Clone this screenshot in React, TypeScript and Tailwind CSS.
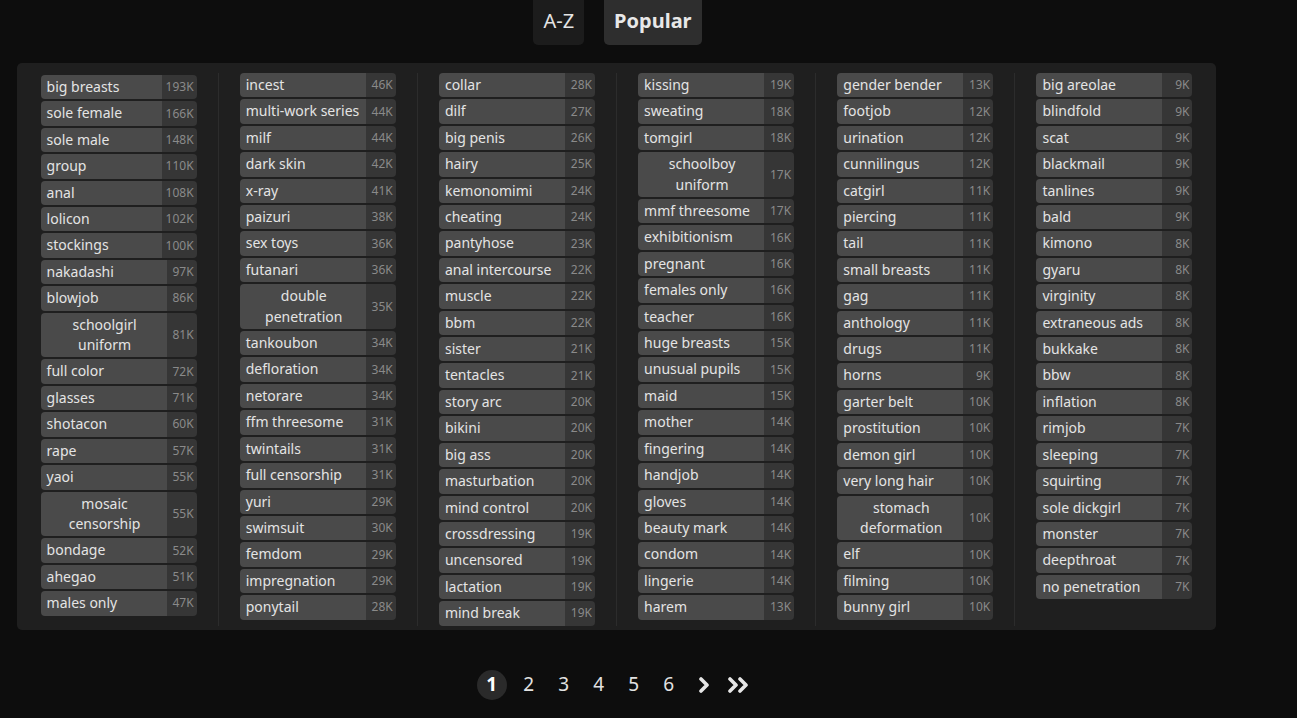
import React from 'react'

type Tag = [string, string]

const columns: Tag[][] = [
  [
    ['big breasts', '193K'], ['sole female', '166K'], ['sole male', '148K'], ['group', '110K'],
    ['anal', '108K'], ['lolicon', '102K'], ['stockings', '100K'], ['nakadashi', '97K'],
    ['blowjob', '86K'], ['schoolgirl|uniform', '81K'], ['full color', '72K'], ['glasses', '71K'],
    ['shotacon', '60K'], ['rape', '57K'], ['yaoi', '55K'], ['mosaic|censorship', '55K'],
    ['bondage', '52K'], ['ahegao', '51K'], ['males only', '47K'],
  ],
  [
    ['incest', '46K'], ['multi-work series', '44K'], ['milf', '44K'], ['dark skin', '42K'],
    ['x-ray', '41K'], ['paizuri', '38K'], ['sex toys', '36K'], ['futanari', '36K'],
    ['double|penetration', '35K'], ['tankoubon', '34K'], ['defloration', '34K'], ['netorare', '34K'],
    ['ffm threesome', '31K'], ['twintails', '31K'], ['full censorship', '31K'], ['yuri', '29K'],
    ['swimsuit', '30K'], ['femdom', '29K'], ['impregnation', '29K'], ['ponytail', '28K'],
  ],
  [
    ['collar', '28K'], ['dilf', '27K'], ['big penis', '26K'], ['hairy', '25K'],
    ['kemonomimi', '24K'], ['cheating', '24K'], ['pantyhose', '23K'], ['anal intercourse', '22K'],
    ['muscle', '22K'], ['bbm', '22K'], ['sister', '21K'], ['tentacles', '21K'],
    ['story arc', '20K'], ['bikini', '20K'], ['big ass', '20K'], ['masturbation', '20K'],
    ['mind control', '20K'], ['crossdressing', '19K'], ['uncensored', '19K'], ['lactation', '19K'],
    ['mind break', '19K'],
  ],
  [
    ['kissing', '19K'], ['sweating', '18K'], ['tomgirl', '18K'], ['schoolboy|uniform', '17K'],
    ['mmf threesome', '17K'], ['exhibitionism', '16K'], ['pregnant', '16K'], ['females only', '16K'],
    ['teacher', '16K'], ['huge breasts', '15K'], ['unusual pupils', '15K'], ['maid', '15K'],
    ['mother', '14K'], ['fingering', '14K'], ['handjob', '14K'], ['gloves', '14K'],
    ['beauty mark', '14K'], ['condom', '14K'], ['lingerie', '14K'], ['harem', '13K'],
  ],
  [
    ['gender bender', '13K'], ['footjob', '12K'], ['urination', '12K'], ['cunnilingus', '12K'],
    ['catgirl', '11K'], ['piercing', '11K'], ['tail', '11K'], ['small breasts', '11K'],
    ['gag', '11K'], ['anthology', '11K'], ['drugs', '11K'], ['horns', '9K'],
    ['garter belt', '10K'], ['prostitution', '10K'], ['demon girl', '10K'], ['very long hair', '10K'],
    ['stomach|deformation', '10K'], ['elf', '10K'], ['filming', '10K'], ['bunny girl', '10K'],
  ],
  [
    ['big areolae', '9K'], ['blindfold', '9K'], ['scat', '9K'], ['blackmail', '9K'],
    ['tanlines', '9K'], ['bald', '9K'], ['kimono', '8K'], ['gyaru', '8K'],
    ['virginity', '8K'], ['extraneous ads', '8K'], ['bukkake', '8K'], ['bbw', '8K'],
    ['inflation', '8K'], ['rimjob', '7K'], ['sleeping', '7K'], ['squirting', '7K'],
    ['sole dickgirl', '7K'], ['monster', '7K'], ['deepthroat', '7K'], ['no penetration', '7K'],
  ],
]

function TagRow({ name, count }: { name: string; count: string }) {
  const lines = name.split('|')
  return (
    <a href="#" className="flex w-[156px] rounded-[4px] overflow-hidden">
      <span className="flex-1 min-w-0 bg-[#4a4a4a] text-[#e4e4e4] text-[14px] leading-[20.4px] py-[2px] pl-[6px] pr-[4px]">
        {lines.length > 1 ? (
          <span className="block text-center">
            {lines[0]}
            <br />
            {lines[1]}
          </span>
        ) : (
          <span className="whitespace-nowrap">{name}</span>
        )}
      </span>
      <span className="flex items-center justify-end min-w-[30px] bg-[#363636] text-[#8a8a8a] text-[12px] pl-[4px] pr-[3px]">
        {count}
      </span>
    </a>
  )
}

function Chevron({ double }: { double?: boolean }) {
  return (
    <svg width={double ? 24 : 12} height="16" viewBox={double ? '0 0 24 16' : '0 0 12 16'} fill="none">
      <polyline points="3,2 9,8 3,14" stroke="#e6e6e6" strokeWidth="3.6" strokeLinecap="round" strokeLinejoin="round" />
      {double && (
        <polyline points="13,2 19,8 13,14" stroke="#e6e6e6" strokeWidth="3.6" strokeLinecap="round" strokeLinejoin="round" />
      )}
    </svg>
  )
}

export default function App() {
  return (
    <div className="min-h-screen bg-[#0d0d0d] font-['Noto_Sans',sans-serif]">
      <div className="w-[1233px]">
        {/* sort tabs */}
        <div className="flex justify-center gap-[20px] pl-[2px]">
          <a href="#" className="flex items-center h-[45px] pb-[3px] px-[10px] rounded-b-[5px] bg-[#1c1c1c] text-[#e4e4e4] text-[20px]">
            A-Z
          </a>
          <a href="#" className="flex items-center h-[45px] pb-[3px] px-[10px] rounded-b-[5px] bg-[#2e2e2e] text-[#e8e8e8] text-[20px] font-bold">
            Popular
          </a>
        </div>

        {/* tag panel */}
        <div className="mx-[17px] mt-[18px] flex rounded-[5px] bg-[#1f1f1f] px-[2.5px] pt-[10px] pb-[4px]">
          {columns.map((col, i) => (
            <div
              key={i}
              className={`flex-1 flex flex-col items-center gap-[2px] ${i < 5 ? 'border-r border-[#2c2c2c]' : ''} ${i === 0 ? 'pt-[2px]' : ''}`}
            >
              {col.map(([name, count]) => (
                <TagRow key={name} name={name} count={count} />
              ))}
            </div>
          ))}
        </div>

        {/* pagination */}
        <div className="mt-[40px] flex justify-center items-center text-[19px] text-[#e2e2e2]">
          <span className="flex items-center justify-center w-[30px] h-[30px] mr-[4.5px] rounded-full bg-[#2a2a2a] font-bold text-white">
            1
          </span>
          {['2', '3', '4', '5', '6'].map(n => (
            <a key={n} href="#" className="flex items-center justify-center w-[35px] h-[30px]">
              {n}
            </a>
          ))}
          <a href="#" className="flex items-center justify-center w-[35px] h-[30px]">
            <Chevron />
          </a>
          <a href="#" className="flex items-center justify-center w-[35px] h-[30px]">
            <Chevron double />
          </a>
        </div>
      </div>
    </div>
  )
}
